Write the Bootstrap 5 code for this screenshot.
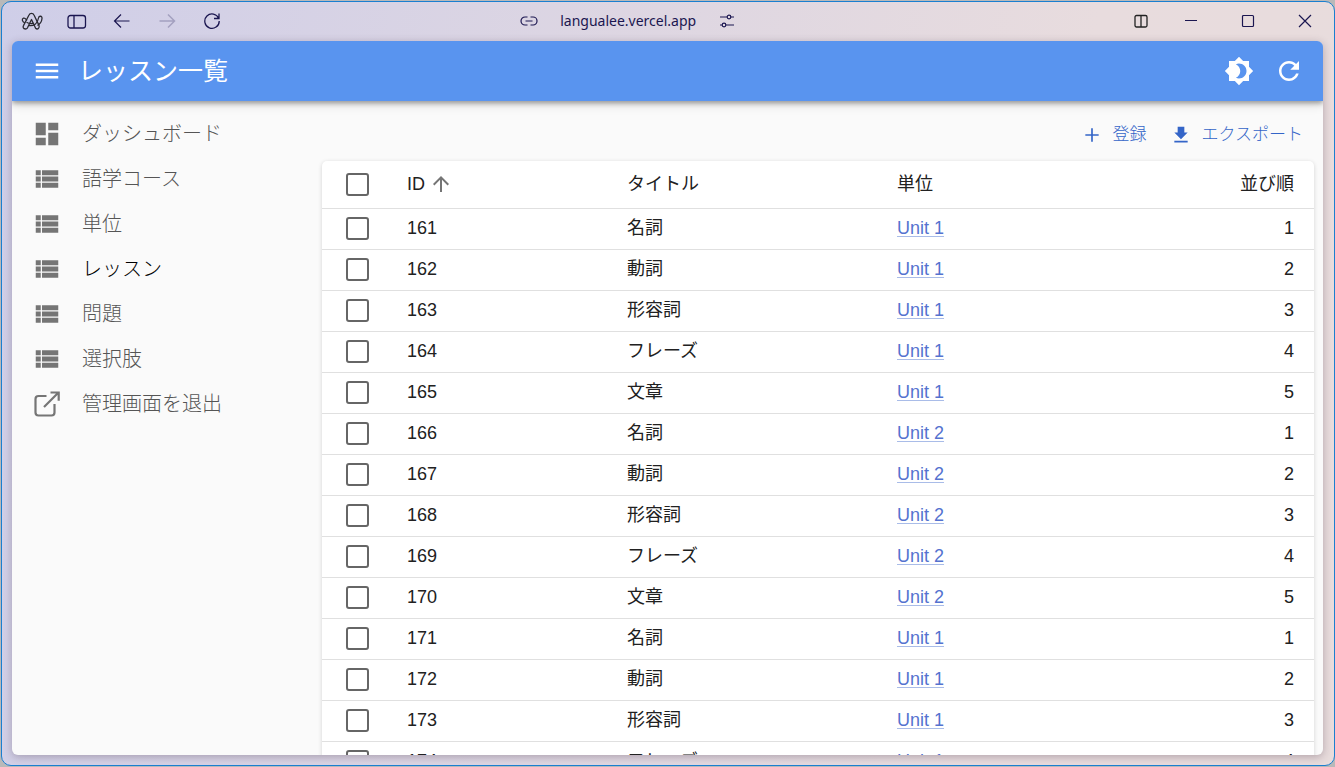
<!DOCTYPE html>
<html lang="ja">
<head>
<meta charset="utf-8">
<meta name="viewport" content="width=device-width, initial-scale=1">
<title>レッスン一覧</title>
<link href="https://cdn.jsdelivr.net/npm/bootstrap@5.3.0/dist/css/bootstrap.min.css" rel="stylesheet">
<style>
  body { font-family: "Liberation Sans", "Noto Sans CJK JP", sans-serif; background: #b9b9b9; color: #212121; }
  button { color: inherit; }
  .app-window { margin: 1px 0 1px 1px; border: 1px solid #1a7fd0; border-radius: 10px; padding: 0 11px 10px 10px;
    background: linear-gradient(100deg, #cfcee8 0%, #e8dcde 75%, #e8dcdc 100%); }
  .titlebar { height: 39px; padding: 0 6px 2px 8px; color: #1b1650; }
  .bar-button { width: 24px; height: 24px; padding: 0; border: 0; background: none; display: flex; align-items: center; justify-content: center; }
  .bar-left { gap: 21px; }
  .bar-right { gap: 26px; }
  .window-controls { gap: 33px; }
  .address { gap: 22px; left: 47%; padding-bottom: 2px; font: 14px/20px "Noto Sans", sans-serif; }
  .page { background: #fafafa; border-radius: 6px; box-shadow: 0 2px 8px rgba(60, 40, 60, .3); }
  .appbar { height: 60px; padding: 0 19px 0 20px; background: #5994ef; color: #fff; z-index: 1;
    box-shadow: 0 2px 5px rgba(0, 0, 0, .35), 0 4px 10px rgba(0, 0, 0, .12); }
  .appbar h1 { font-size: 25px; line-height: 30px; font-weight: 400; margin: 0 0 0 16px; }
  .appbar .bar-button { width: 30px; height: 30px; }
  .appbar-tools { gap: 20px; }
  .sidebar { width: 300px; padding-top: 10px; }
  .sidebar a { height: 45px; padding-left: 20px; gap: 20px; font-size: 20px; font-weight: 300; color: #555; text-decoration: none; }
  .sidebar a.active { color: #000; }
  .sidebar svg { color: #757575; }
  .content { padding: 16px 9px 0 10px; }
  .actions { height: 36px; margin-bottom: 8px; padding-right: 11px; gap: 24px; }
  .actions button { border: 0; padding: 0; background: none; color: #3465c8; font-size: 17px; font-weight: 300; gap: 11px; }
  .sheet { background: #fff; border-radius: 5px; box-shadow: 0 1px 4px rgba(0, 0, 0, .16); }
  .lessons { table-layout: fixed; width: 100%; font-size: 18px; line-height: 24px; }
  .lessons tr { height: 41px; border-bottom: 1px solid #e0e0e0; }
  .lessons thead tr { height: 47px; }
  .lessons th, .lessons td { padding: 0 20px 2px; font-weight: 400; }
  .lessons th { padding-bottom: 0; }
  .lessons a { color: #5472cf; text-decoration-color: #a9bce8; text-underline-offset: 2px; text-decoration-thickness: 1px; }
  .check-col { width: 65px; } .id-col { width: 220px; } .title-col { width: 270px; }
  .lessons .check-cell { padding: 0 0 0 24px; }
  .lessons input { appearance: none; display: block; width: 23px; height: 23px; border: 2px solid #666; border-radius: 3px; margin: 0; background: #fff; }
  .lessons input:checked { background: #5994ef; }
</style>
</head>
<body class="vh-100 overflow-hidden d-flex flex-column">
<div class="app-window flex-grow-1 d-flex flex-column overflow-hidden">
  <header class="titlebar flex-shrink-0 d-flex align-items-center justify-content-between position-relative">
    <div class="bar-left d-flex">
      <button class="bar-button" aria-label="Arc"><svg width="22" height="20" viewBox="0 0 22 20" fill="none" stroke="#2b2b33" stroke-width="1.3" stroke-linejoin="round"><path d="M4.500 18C2 18 1.700 16 2.600 14.400L8 4C9 1.700 12 1.700 13 4L18 14.400C19 17 16.500 19 14.600 17.300L10.500 8.500L6.500 16.800Q5.700 18 4.500 18Z"/><path d="M4 12C1 10.500.5 8 2.500 7.200C4.300 6.500 5 8.500 6 9.500M7.500 14.500C13 15.500 16.500 12.500 17.500 7C18 4.500 21.300 4.700 21 7.500C20.700 10.500 19 13 16.500 14.500M5.500 11.300Q9 13.500 12.500 12.200"/></svg></button>
      <button class="bar-button" aria-label="サイドバー"><svg width="20" height="16" viewBox="0 0 20 16" fill="none" stroke="currentColor" stroke-width="1.300"><rect x="1" y="2.500" width="17.500" height="12.500" rx="2.500"/><path d="M7 2.500V15"/></svg></button>
      <button class="bar-button" aria-label="戻る"><svg width="18" height="16" viewBox="0 0 18 16" fill="none" stroke="currentColor" stroke-width="1.200"><path d="M16.500 8H1.500M8 1.500L1.500 8L8 14.500"/></svg></button>
      <button class="bar-button opacity-25" aria-label="進む"><svg width="18" height="16" viewBox="0 0 18 16" fill="none" stroke="currentColor" stroke-width="1.500"><path d="M1.500 8h15M10 1.500L16.500 8L10 14.500"/></svg></button>
      <button class="bar-button" aria-label="再読み込み"><svg width="18" height="18" viewBox="0 0 18 18" fill="none" stroke="currentColor" stroke-width="1.300"><path d="M15.700 6.500A7.200 7.200 0 1 0 16.200 9M16 1.500V6.500H11"/></svg></button>
    </div>
    <div class="address d-flex align-items-center position-absolute top-50 translate-middle">
      <svg width="18" height="12" viewBox="0 0 18 12" fill="none" stroke="currentColor" stroke-width="1.200"><path d="M7.500 2H5a4 4 0 0 0 0 8h2.500M10.500 2H13a4 4 0 0 1 0 8h-2.500M5.500 6h7"/></svg>
      <span>langualee.vercel.app</span>
      <svg width="18" height="14" viewBox="0 0 18 14" fill="none" stroke="currentColor" stroke-width="1.200"><path d="M2 3h7M13 3h3M2 11h2M8 11h8"/><circle cx="11" cy="3" r="1.800"/><circle cx="6" cy="11" r="1.800"/></svg>
    </div>
    <div class="bar-right d-flex">
      <button class="bar-button" aria-label="分割"><svg width="14" height="14" viewBox="0 0 14 14" fill="none" stroke="#222" stroke-width="1.300"><rect x="1" y="1.500" width="12" height="11.500" rx="1.500"/><path d="M7 1.500V13"/></svg></button>
      <div class="window-controls d-flex">
        <button class="bar-button" aria-label="最小化"><svg width="14" height="14" viewBox="0 0 14 14" stroke="currentColor"><path d="M1 6.500h12"/></svg></button>
        <button class="bar-button" aria-label="最大化"><svg width="14" height="14" viewBox="0 0 14 14" fill="none" stroke="currentColor" stroke-width="1.200"><rect x="1.500" y="1.500" width="11" height="11" rx="1"/></svg></button>
        <button class="bar-button" aria-label="閉じる"><svg width="14" height="14" viewBox="0 0 14 14" stroke="currentColor" stroke-width="1.200"><path d="M1 1l12 12M13 1L1 13"/></svg></button>
      </div>
    </div>
  </header>
  <div class="page flex-grow-1 d-flex flex-column overflow-hidden">
    <div class="appbar flex-shrink-0 d-flex align-items-center">
      <button class="bar-button" aria-label="メニュー"><svg width="30" height="30" viewBox="0 0 24 24" fill="currentColor"><path d="M3 18h18v-2H3v2zm0-5h18v-2H3v2zm0-7v2h18V6H3z"/></svg></button>
      <h1>レッスン一覧</h1>
      <div class="appbar-tools ms-auto d-flex">
        <button class="bar-button" aria-label="テーマ切替"><svg width="30" height="30" viewBox="0 0 24 24" fill="currentColor"><path d="M20 8.690V4h-4.690L12 .69 8.690 4H4v4.690L.69 12 4 15.310V20h4.690L12 23.310 15.310 20H20v-4.690L23.310 12 20 8.690zM12 18c-.89 0-1.740-.2-2.500-.55C11.560 16.500 13 14.420 13 12s-1.440-4.500-3.500-5.450C10.260 6.200 11.110 6 12 6c3.310 0 6 2.690 6 6s-2.690 6-6 6z"/></svg></button>
        <button class="bar-button" aria-label="更新"><svg width="30" height="30" viewBox="0 0 24 24" fill="currentColor"><path d="M17.650 6.350C16.200 4.900 14.210 4 12 4c-4.420 0-7.990 3.580-7.990 8s3.570 8 7.990 8c3.730 0 6.840-2.550 7.730-6h-2.080c-.82 2.330-3.040 4-5.650 4-3.310 0-6-2.690-6-6s2.690-6 6-6c1.660 0 3.140.69 4.220 1.780L13 11h7V4l-2.350 2.350z"/></svg></button>
      </div>
    </div>
    <div class="flex-grow-1 d-flex overflow-hidden">
      <svg class="d-none"><symbol id="list-icon" viewBox="0 0 24 24"><path fill="currentColor" d="M3 14h4v-4H3v4zm0 5h4v-4H3v4zM3 9h4V5H3v4zm5 5h13v-4H8v4zm0 5h13v-4H8v4zM8 5v4h13V5H8z"/></symbol></svg>
      <nav class="sidebar flex-shrink-0 d-flex flex-column">
        <a href="#" class="d-flex align-items-center"><svg width="30" height="30" viewBox="0 0 24 24" fill="currentColor"><path d="M3 13h8V3H3v10zm0 8h8v-6H3v6zm10 0h8V11h-8v10zm0-18v6h8V3h-8z"/></svg>ダッシュボード</a>
        <a href="#" class="d-flex align-items-center"><svg width="30" height="30"><use href="#list-icon"/></svg>語学コース</a>
        <a href="#" class="d-flex align-items-center"><svg width="30" height="30"><use href="#list-icon"/></svg>単位</a>
        <a href="#" class="d-flex align-items-center active"><svg width="30" height="30"><use href="#list-icon"/></svg>レッスン</a>
        <a href="#" class="d-flex align-items-center"><svg width="30" height="30"><use href="#list-icon"/></svg>問題</a>
        <a href="#" class="d-flex align-items-center"><svg width="30" height="30"><use href="#list-icon"/></svg>選択肢</a>
        <a href="#" class="d-flex align-items-center"><svg width="30" height="30" viewBox="0 0 30 30" fill="none" stroke="currentColor" stroke-width="2.200"><path d="M14.500 7H6.500Q3.500 7 3.500 10V23.500Q3.500 26.500 6.500 26.500H19.500Q22.500 26.500 22.500 23.500V15M12 18L26 4M18.500 3.500H26.700V11.700"/></svg>管理画面を退出</a>
      </nav>
      <main class="content flex-grow-1 overflow-hidden">
        <div class="actions d-flex justify-content-end align-items-center">
          <button class="d-flex align-items-center"><svg width="20" height="20" viewBox="0 0 24 24" fill="currentColor"><path d="M20 13h-7v7h-2v-7H4v-2h7V4h2v7h7v2z"/></svg>登録</button>
          <button class="d-flex align-items-center"><svg width="20" height="20" viewBox="0 0 24 24" fill="currentColor"><path d="M20 9h-4V2H8v7H4l8 8 8-8zM4 19v2h16v-2H4z"/></svg>エクスポート</button>
        </div>
        <div class="sheet">
          <table class="lessons">
            <colgroup><col class="check-col"><col class="id-col"><col class="title-col"><col class="title-col"><col></colgroup>
            <thead><tr><th class="check-cell"><input type="checkbox" aria-label="すべて選択"></th><th><span class="d-flex align-items-center gap-1">ID <svg width="24" height="24" viewBox="0 0 24 24" fill="#757575"><path d="M4 12l1.410 1.410L11 7.830V20h2V7.830l5.580 5.590L20 12l-8-8-8 8z"/></svg></span></th><th>タイトル</th><th>単位</th><th class="text-end">並び順</th></tr></thead>
            <tbody id="lesson-rows"></tbody>
          </table>
        </div>
      </main>
    </div>
  </div>
</div>
<script src="https://cdn.jsdelivr.net/npm/bootstrap@5.3.0/dist/js/bootstrap.bundle.min.js"></script>
<script>
  const titles = ["名詞", "動詞", "形容詞", "フレーズ", "文章"];
  const units = ["Unit 1", "Unit 2", "Unit 1"];
  document.getElementById("lesson-rows").innerHTML = Array.from({ length: 14 }, (_, i) => `
    <tr><td class="check-cell"><input type="checkbox" aria-label="${161 + i} を選択"></td>
    <td>${161 + i}</td><td>${titles[i % 5]}</td><td><a href="#">${units[Math.floor(i / 5)]}</a></td>
    <td class="text-end">${i % 5 + 1}</td></tr>`).join("");
</script>
</body>
</html>
